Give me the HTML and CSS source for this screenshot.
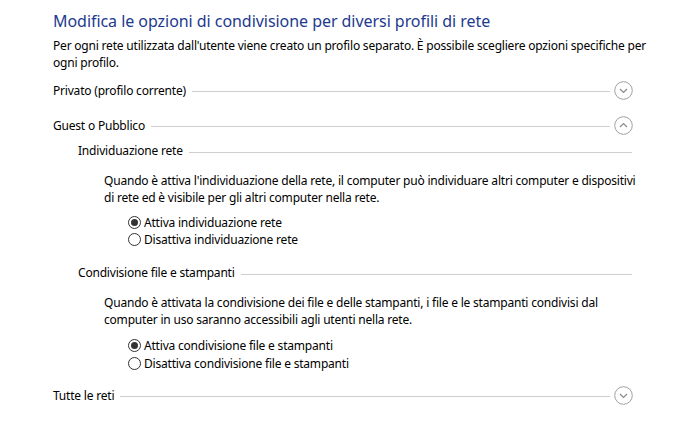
FILE: index.html
```html
<!DOCTYPE html>
<html lang="it">
<head>
<meta charset="utf-8">
<title>Impostazioni di condivisione avanzate</title>
<link rel="stylesheet" href="styles.css">
</head>
<body>
<div class="page">
  <h1 class="title">Modifica le opzioni di condivisione per diversi profili di rete</h1>
  <p class="desc">Per ogni rete utilizzata dall'utente viene creato un profilo separato. È possibile scegliere opzioni specifiche per ogni profilo.</p>

  <div class="group-head first">
    <span class="label">Privato (profilo corrente)</span>
    <span class="rule"></span>
    <svg class="toggle" width="19" height="19" viewBox="0 0 19 19"><circle cx="9.5" cy="9.5" r="8.8" fill="none" stroke="#a0a0a0" stroke-width="1"/><polyline points="6,8 9.5,11.5 13,8" fill="none" stroke="#8a8a8a" stroke-width="1.2"/></svg>
  </div>

  <div class="group-head second">
    <span class="label">Guest o Pubblico</span>
    <span class="rule"></span>
    <svg class="toggle" width="19" height="19" viewBox="0 0 19 19"><circle cx="9.5" cy="9.5" r="8.8" fill="none" stroke="#a0a0a0" stroke-width="1"/><polyline points="6,11 9.5,7.5 13,11" fill="none" stroke="#8a8a8a" stroke-width="1.2"/></svg>
  </div>

  <div class="group-body">
    <div class="sub-head sub1">
      <span class="label">Individuazione rete</span>
      <span class="rule"></span>
    </div>
    <p class="sub-text">Quando è attiva l'individuazione della rete, il computer può individuare altri computer e dispositivi di rete ed è visibile per gli altri computer nella rete.</p>
    <div class="options opt1">
      <div class="option"><span class="radio checked"></span><span>Attiva individuazione rete</span></div>
      <div class="option"><span class="radio"></span><span>Disattiva individuazione rete</span></div>
    </div>

    <div class="sub-head sub2">
      <span class="label">Condivisione file e stampanti</span>
      <span class="rule"></span>
    </div>
    <p class="sub-text">Quando è attivata la condivisione dei file e delle stampanti, i file e le stampanti condivisi dal computer in uso saranno accessibili agli utenti nella rete.</p>
    <div class="options opt2">
      <div class="option"><span class="radio checked"></span><span>Attiva condivisione file e stampanti</span></div>
      <div class="option"><span class="radio"></span><span>Disattiva condivisione file e stampanti</span></div>
    </div>
  </div>

  <div class="group-head last">
    <span class="label">Tutte le reti</span>
    <span class="rule"></span>
    <svg class="toggle" width="19" height="19" viewBox="0 0 19 19"><circle cx="9.5" cy="9.5" r="8.8" fill="none" stroke="#a0a0a0" stroke-width="1"/><polyline points="6,8 9.5,11.5 13,8" fill="none" stroke="#8a8a8a" stroke-width="1.2"/></svg>
  </div>
</div>
</body>
</html>
```

FILE: styles.css
```css
html, body {
  margin: 0;
  padding: 0;
  background: #ffffff;
}

body {
  font-family: "Noto Sans", "Open Sans", "DejaVu Sans", sans-serif;
  font-size: 12px;
  letter-spacing: -0.2px;
  color: #000000;
  width: 695px;
  height: 426px;
  overflow: hidden;
}

.page {
  padding: 10px 0 0 53px;
  width: 580px;
}

.title {
  margin: 0;
  font-weight: normal;
  font-size: 16px;
  letter-spacing: -0.05px;
  line-height: 22px;
  color: #1e3a8e;
  white-space: nowrap;
}

.desc {
  margin: 5px 0 0 0;
  line-height: 17px;
  width: 600px;
}

.group-head {
  display: flex;
  align-items: center;
  height: 20px;
}

.group-head.first { margin-top: 9px; }
.group-head.second { margin-top: 15px; }
.group-head.last { margin-top: 13px; }

.label {
  white-space: nowrap;
  line-height: 17px;
}

.rule {
  flex: 1;
  height: 1px;
  background: #cfcfcf;
  margin: 3px 4px 0 6px;
}

.toggle {
  display: block;
  flex: none;
}

.group-body {
  padding-left: 25px;
}

.sub-head {
  display: flex;
  align-items: center;
  height: 17px;
}

.sub-head .rule { margin-right: 1px; }

.sub1 { margin-top: 7px; }
.sub2 { margin-top: 16px; }

.sub-text {
  margin: 13px 0 0 26px;
  line-height: 17px;
  width: 533px;
}

.options {
  padding-left: 50px;
}

.opt1 { margin-top: 8px; }
.opt2 { margin-top: 9px; }

.option {
  display: flex;
  align-items: center;
  height: 17px;
}

.opt2 .option + .option { margin-top: 1px; }

.radio {
  width: 11px;
  height: 11px;
  border: 1px solid #333333;
  border-radius: 50%;
  margin-right: 3px;
  position: relative;
  flex: none;
}

.radio.checked::after {
  content: "";
  position: absolute;
  left: 2px;
  top: 2px;
  width: 7px;
  height: 7px;
  border-radius: 50%;
  background: #333333;
}
```
